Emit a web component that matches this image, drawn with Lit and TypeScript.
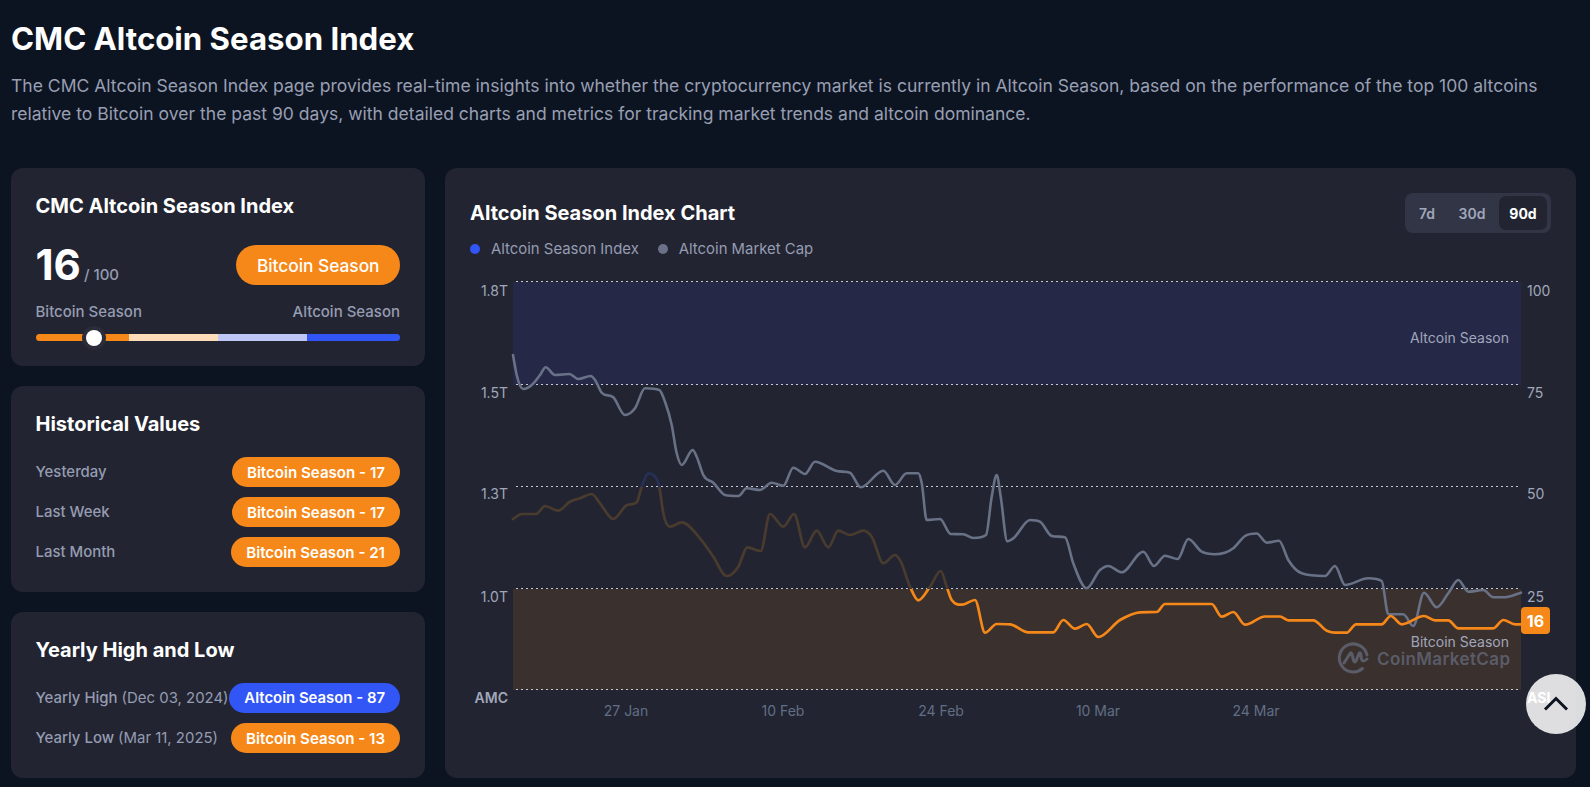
import { LitElement, html, css, svg } from "lit";
import { customElement } from "lit/decorators.js";

type P = [number, number];

const GRAY: P[] = [[513,355],[516.7,375],[523.3,389],[531.7,385],[540,375],[545.7,367.3],[555,375],[569.3,374],[578.3,379],[590.7,376],[595,380],[601.7,392.7],[613.3,397.3],[625,415],[635,408.3],[645,388.3],[659.3,390],[665,401.7],[671.7,425],[676.7,453.3],[681.7,465],[692.7,450],[696.7,456.7],[703.3,475],[713.3,482.7],[725,495],[738.3,496],[746.7,488.3],[760,490],[771.7,482.7],[783.3,485.7],[793.3,467.7],[805,474],[815,461.7],[836.7,471],[850,472.7],[860.7,487.3],[883.3,470.7],[895,485],[906.7,473.3],[918.3,473.3],[921.7,483],[926.7,520],[940,519],[950.7,534],[963.3,534.3],[973.3,538],[986,535],[991.7,496.7],[996.7,475],[1000.7,496.7],[1007.3,541.3],[1013.3,538.3],[1030,520],[1040,521.7],[1051.7,536],[1065,537.3],[1073.3,563.3],[1086.7,588.3],[1100,570],[1108.3,566],[1121.7,572.3],[1143.3,551.7],[1154,566],[1165,555.7],[1177.7,559],[1188.3,539],[1201.7,551.7],[1215,554.3],[1233.3,548.3],[1245,536],[1256.7,533.5],[1266.7,542.7],[1279,540.7],[1288.3,560],[1301.7,573.3],[1325,576],[1335,566],[1345,585],[1368.3,578.3],[1381.7,581],[1388.3,614.3],[1403.3,614.3],[1413.3,626],[1424,592.7],[1436.7,607.3],[1448.3,593.3],[1458.3,580],[1468.3,591.7],[1483.3,590],[1493.3,597.3],[1505,597.3],[1521,592.7]];

const INDEX: P[] = [[513,519],[521.7,514],[536,514],[545,506],[558.3,510.7],[570,501.7],[580,498.3],[591.7,494],[600,503.3],[613.3,519],[626,505.7],[636.7,502.3],[641.7,486.7],[648.3,473.3],[654,475.5],[659.3,486.7],[663.3,513.3],[670,526.7],[681.7,522.3],[700,538.3],[713.3,556.7],[726.7,576],[738.3,566.7],[747.3,547.3],[760.7,551],[770,514],[783.3,526.7],[794,514],[805,547.3],[816.7,530.7],[828.3,547.3],[838.3,530.7],[850,535],[863.3,530.7],[871.7,536.7],[883.3,563.3],[895,555],[900,560],[910,586.7],[918.3,600.3],[930,586.7],[940.7,571],[946.7,586.7],[951.7,600],[961.7,604.7],[975,600],[985,632.7],[996.7,624],[1010,624.3],[1028.3,632.3],[1053.3,632.3],[1063.3,620],[1075,628.7],[1086.7,624],[1098.3,637],[1120,620],[1140,612.3],[1156.7,612],[1165,604],[1211.7,604],[1221.7,616.7],[1233.3,612],[1245,624.7],[1265,616.5],[1280,616.5],[1288.3,620.3],[1313.3,620.3],[1326.7,630.7],[1335,632.7],[1346.7,632.7],[1356,624.3],[1381.7,624.3],[1390.7,616],[1401.7,624.3],[1424,616],[1435,620.3],[1448.3,620.3],[1458.3,628.3],[1493.3,628.3],[1503.3,620],[1515,624.3],[1521,624.3]];

/** Cubic interpolation with flat tangents at extrema and limited overshoot. */
function smooth(pts: P[]): string {
  const n = pts.length;
  const slope: number[] = [];
  for (let i = 0; i < n - 1; i++) slope.push((pts[i + 1][1] - pts[i][1]) / (pts[i + 1][0] - pts[i][0]));
  const tan: number[] = [slope[0]];
  for (let i = 1; i < n - 1; i++) {
    const a = slope[i - 1];
    const b = slope[i];
    if (a * b <= 0) tan.push(0);
    else {
      const mid = (a * (pts[i + 1][0] - pts[i][0]) + b * (pts[i][0] - pts[i - 1][0])) / (pts[i + 1][0] - pts[i - 1][0]);
      const lim = 3 * Math.min(Math.abs(a), Math.abs(b));
      tan.push(Math.sign(a) * Math.min(Math.abs(mid), lim));
    }
  }
  tan.push(slope[n - 2]);
  let d = `M${pts[0][0]} ${pts[0][1]}`;
  for (let i = 0; i < n - 1; i++) {
    const h = (pts[i + 1][0] - pts[i][0]) / 3;
    d += `C${(pts[i][0] + h).toFixed(1)} ${(pts[i][1] + h * tan[i]).toFixed(1)} ${(pts[i + 1][0] - h).toFixed(1)} ${(pts[i + 1][1] - h * tan[i + 1]).toFixed(1)} ${pts[i + 1][0]} ${pts[i + 1][1]}`;
  }
  return d;
}

const PLOT = { l: 513, r: 1521 };
const GRID = [281, 384, 486, 588, 689];
const LEFT_AXIS = [["1.8T", 290], ["1.5T", 392], ["1.3T", 493], ["1.0T", 596]] as const;
const RIGHT_AXIS = [["100", 290], ["75", 392], ["50", 493], ["25", 596]] as const;
const X_AXIS = [["27 Jan", 626], ["10 Feb", 783], ["24 Feb", 941], ["10 Mar", 1098], ["24 Mar", 1256]] as const;

function chart() {
  const gray = smooth(GRAY);
  const idx = smooth(INDEX);
  return html`<svg class="chart" viewBox="471 270 1080 500" width="1080" height="500">
    ${svg`
      <defs>
        <clipPath id="clipHigh"><rect x="500" y="270" width="1030" height="${GRID[2] + 1 - 270}"></rect></clipPath>
        <clipPath id="clipMid"><rect x="500" y="${GRID[2] + 1}" width="1030" height="${GRID[3] - GRID[2]}"></rect></clipPath>
        <clipPath id="clipLow"><rect x="500" y="${GRID[3] + 1}" width="1030" height="${GRID[4] - GRID[3]}"></rect></clipPath>
      </defs>
      <rect class="band-alt" x="${PLOT.l}" y="${GRID[0] + 1}" width="${PLOT.r - PLOT.l}" height="${GRID[1] - GRID[0]}"></rect>
      <rect class="band-btc" x="${PLOT.l}" y="${GRID[3] + 1}" width="${PLOT.r - PLOT.l}" height="${GRID[4] - GRID[3]}"></rect>
      ${GRID.map((y) => svg`<line class="grid" x1="${PLOT.l}" x2="${PLOT.r}" y1="${y + 0.5}" y2="${y + 0.5}"></line>`)}
      ${LEFT_AXIS.map(([t, y]) => svg`<text class="axis" x="508" y="${y}" text-anchor="end" dominant-baseline="central">${t}</text>`)}
      <text class="axis strong" x="508" y="697" text-anchor="end" dominant-baseline="central">AMC</text>
      ${RIGHT_AXIS.map(([t, y]) => svg`<text class="axis" x="1527" y="${y}" dominant-baseline="central">${t}</text>`)}
      <text class="asi" x="1527" y="697" dominant-baseline="central">ASI</text>
      ${X_AXIS.map(([t, x]) => svg`<text class="xaxis" x="${x}" y="710" text-anchor="middle" dominant-baseline="central">${t}</text>`)}
      <text class="zone" x="1509" y="337" text-anchor="end" dominant-baseline="central">Altcoin Season</text>
      <text class="zone" x="1509" y="641" text-anchor="end" dominant-baseline="central">Bitcoin Season</text>
      <g class="mark">
        <path d="M1367 655A14 14 0 1 0 1362.5 668.5"></path>
        <path d="M1344 663L1350 653.5Q1351 652 1351.7 653.5L1353.8 661Q1354.7 663 1356 661L1359 653.5Q1360 652 1360.7 653.5L1361.5 659Q1362.5 663 1367 659"></path>
      </g>
      <text class="mark-text" x="1377" y="665" textLength="133" lengthAdjust="spacing">CoinMarketCap</text>
      <path class="line gray" d="${gray}"></path>
      <path class="line high" clip-path="url(#clipHigh)" d="${idx}"></path>
      <path class="line mid" clip-path="url(#clipMid)" d="${idx}"></path>
      <path class="line low" clip-path="url(#clipLow)" d="${idx}"></path>
      <rect class="badge" x="1521" y="607" width="29" height="27" rx="4"></rect>
      <text class="badge-text" x="1535.5" y="621" text-anchor="middle" dominant-baseline="central">16</text>
    `}
  </svg>`;
}

@customElement("app-root")
export class AppRoot extends LitElement {
  static styles = css`
    :host {
      display: block;
      position: relative;
      height: 787px;
      overflow: hidden;
      box-sizing: border-box;
      padding: 18px 14px 0 11px;
      background: #0d1421;
      font-family: Inter, "Liberation Sans", sans-serif;
      color: #fff;
    }
    h1 { margin: 0; font-size: 31.2px; line-height: 42px; font-weight: 700; }
    .intro { margin: 12px 0 0; font-size: 17.55px; line-height: 28px; color: #989fb3; }
    .layout { display: grid; grid-template-columns: 414px 1131px; gap: 20px; margin-top: 40px; }
    .side { display: flex; flex-direction: column; gap: 20px; height: 610px; }
    .card { background: #222531; border-radius: 12px; box-sizing: border-box; }
    .side .card { padding: 24px 25px 0 24.5px; flex: 1 1 auto; }
    .side .top { flex: 0 0 198px; }
    h2 { margin: 0; font-size: 20px; line-height: 28px; font-weight: 700; }
    .score { display: flex; justify-content: space-between; align-items: center; margin-top: 25px; }
    .value { display: flex; align-items: baseline; gap: 3px; }
    .num { font-size: 42px; line-height: 40px; font-weight: 700; }
    .den { font-size: 15px; color: #969cb1; font-weight: 500; }
    .status {
      display: flex; align-items: center; height: 40px; padding: 0 20.5px; border-radius: 20px;
      background: #f68819; font-size: 17.3px; font-weight: 500;
    }
    .ends { display: flex; justify-content: space-between; margin-top: 16px; font-size: 15px; line-height: 21px; color: #969cb1; font-weight: 500; }
    .track { position: relative; display: flex; height: 7px; margin: 12px 0 0 0.5px; border-radius: 4px; overflow: visible; }
    .seg.a { flex: 93; background: #f68819; border-radius: 4px 0 0 4px; }
    .seg.b { flex: 89; background: #fcdcb9; }
    .seg.c { flex: 89; background: #bfc7f6; }
    .seg.d { flex: 93; background: #3156f5; border-radius: 0 4px 4px 0; }
    .thumb {
      position: absolute; top: 50%; width: 16px; height: 16px; margin: -8px 0 0 -8px;
      border-radius: 50%; background: #fff; box-shadow: 0 0 0 4px #2a2d39;
    }
    .rows { display: flex; flex-direction: column; gap: 10px; margin-top: 19px; }
    .row { display: flex; justify-content: space-between; align-items: center; height: 30px; font-size: 14.95px; color: #969cb1; font-weight: 500; white-space: nowrap; }
    .row .date { font-weight: 400; }
    .pill { display: flex; align-items: center; height: 30px; padding: 0 15px; border-radius: 15px; background: #f68819; color: #fff; font-size: 15.1px; font-weight: 600; }
    .pill.blue { background: #3156f5; font-size: 14.9px; }
    .main { padding: 25px 25px 0 25px; height: 610px; }
    .head { display: flex; justify-content: space-between; align-items: center; height: 40px; }
    .tabs { display: flex; padding: 3px 4px 3px 4px; border-radius: 8px; background: #323546; }
    .tab { display: flex; align-items: center; justify-content: center; height: 34px; border-radius: 7px; font-size: 14px; font-weight: 600; color: #a1a7bb; }
    .tab.d7 { width: 36px; }
    .tab.d30 { width: 54px; }
    .tab.on { width: 48px; color: #fff; background: #222531; font-weight: 700; }
    .legend { display: flex; align-items: center; height: 20px; margin-top: 6px; font-size: 14.9px; color: #969cb1; }
    .dot { width: 10px; height: 10px; border-radius: 50%; margin-right: 11px; }
    .dot.idx { background: #3156f5; }
    .dot.cap { background: #6b7186; margin-left: 19px; }
    .chart { display: block; margin: 11px 0 0 1px; }
    .band-alt { fill: #252947; }
    .band-btc { fill: #3a302e; }
    .grid { stroke: #c5c8d3; stroke-width: 1; stroke-dasharray: 2 3; stroke-dashoffset: -3; }
    .axis { font-size: 14px; fill: #a1a7bb; }
    .axis.strong { font-weight: 600; }
    .asi { font-size: 14px; font-weight: 700; fill: #fff; }
    .xaxis { font-size: 14px; fill: #616e85; }
    .zone { font-size: 14px; fill: #a1a7bb; }
    .mark path { fill: none; stroke: #5a5c68; stroke-width: 3; stroke-linecap: round; stroke-linejoin: round; }
    .mark-text { font-family: Inter, sans-serif; font-size: 17px; font-weight: 600; fill: #5a5c68; }
    .line { fill: none; stroke-linecap: round; stroke-linejoin: round; }
    .gray { stroke: #697186; stroke-width: 2.6; }
    .high { stroke: #263056; stroke-width: 2.7; }
    .mid { stroke: #4a3b2f; stroke-width: 2.7; }
    .low { stroke: #f68819; stroke-width: 2.7; }
    .badge { fill: #f68819; }
    .badge-text { font-size: 16px; font-weight: 700; fill: #fff; }
    .up {
      position: absolute; right: 4px; bottom: 53px; width: 60px; height: 60px; padding: 0; border: 0;
      display: flex; align-items: center; justify-content: center;
      border-radius: 50%; background: rgba(255, 255, 255, 0.85);
    }
    .up svg { display: block; }
  `;

  private pillRow(label: unknown, pill: string, blue = false) {
    return html`<div class="row"><span>${label}</span><span class="pill ${blue ? "blue" : ""}">${pill}</span></div>`;
  }

  render() {
    const index = 16;
    return html`
      <h1>CMC Altcoin Season Index</h1>
      <p class="intro">The CMC Altcoin Season Index page provides real-time insights into whether the cryptocurrency market is currently in Altcoin Season, based on the performance of the top 100 altcoins relative to Bitcoin over the past 90 days, with detailed charts and metrics for tracking market trends and altcoin dominance.</p>
      <div class="layout">
        <div class="side">
          <section class="card top">
            <h2>CMC Altcoin Season Index</h2>
            <div class="score">
              <div class="value"><span class="num">16</span><span class="den">/ 100</span></div>
              <div class="status">Bitcoin Season</div>
            </div>
            <div class="ends"><span>Bitcoin Season</span><span>Altcoin Season</span></div>
            <div class="track">
              <span class="seg a"></span><span class="seg b"></span><span class="seg c"></span><span class="seg d"></span>
              <span class="thumb" style="left:${index}%"></span>
            </div>
          </section>
          <section class="card">
            <h2>Historical Values</h2>
            <div class="rows">
              ${this.pillRow("Yesterday", "Bitcoin Season - 17")}
              ${this.pillRow("Last Week", "Bitcoin Season - 17")}
              ${this.pillRow("Last Month", "Bitcoin Season - 21")}
            </div>
          </section>
          <section class="card">
            <h2>Yearly High and Low</h2>
            <div class="rows">
              ${this.pillRow(html`Yearly High <span class="date">(Dec 03, 2024)</span>`, "Altcoin Season - 87", true)}
              ${this.pillRow(html`Yearly Low <span class="date">(Mar 11, 2025)</span>`, "Bitcoin Season - 13")}
            </div>
          </section>
        </div>
        <section class="card main">
          <div class="head">
            <h2>Altcoin Season Index Chart</h2>
            <div class="tabs">
              <span class="tab d7">7d</span><span class="tab d30">30d</span><span class="tab on">90d</span>
            </div>
          </div>
          <div class="legend">
            <span class="dot idx"></span><span>Altcoin Season Index</span>
            <span class="dot cap"></span><span>Altcoin Market Cap</span>
          </div>
          ${chart()}
        </section>
      </div>
      <button class="up" aria-label="Back to top">
        <svg width="26" height="16" viewBox="0 0 26 16"><path d="M2 13.5L13 2.5L24 13.5" fill="none" stroke="#0d1421" stroke-width="3"></path></svg>
      </button>
    `;
  }
}
